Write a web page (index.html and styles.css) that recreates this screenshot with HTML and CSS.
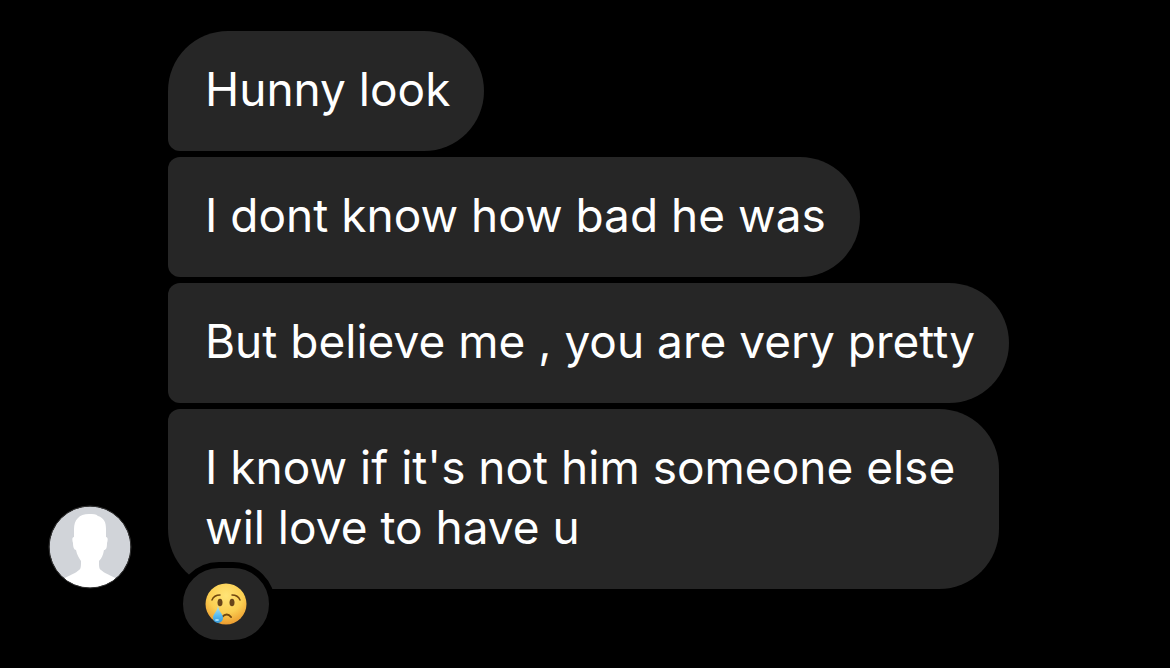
FILE: index.html
```html
<!DOCTYPE html>
<html lang="en">
<head>
<meta charset="utf-8">
<meta name="viewport" content="width=device-width, initial-scale=1">
<title>Chat</title>
<link rel="stylesheet" href="styles.css">
</head>
<body>
<main class="thread">
  <svg class="avatar" viewBox="0 0 84 84" role="img" aria-label="Profile picture">
    <defs><clipPath id="face"><circle cx="42" cy="42" r="40.5"/></clipPath></defs>
    <circle cx="42" cy="42" r="40.5" fill="#d1d4d9"/>
    <path clip-path="url(#face)" fill="#fff" d="M41 9C31 9 26 15 26 24v8c-2 0-2 3-1 6 0 4 1 7 3 7 1 5 3 8 5 11 0 5 0 8-2 9-3 3-9 5-18 10v10h58V75c-9-5-15-7-18-10-2-1-2-4-2-9 3-3 4-6 5-11 2 0 3-2 3-7 1-3 1-6-1-6v-8c0-7-2-11-8-13-2-2-5-2-9-2Z"/>
    <circle cx="42" cy="42" r="41" fill="none" stroke="#333"/>
  </svg>
  <div class="messages">
    <p class="bubble first">Hunny look</p>
    <p class="bubble">I dont know how bad he was</p>
    <p class="bubble">But believe me , you are very pretty</p>
    <div class="bubble last">
      <p class="text">I know if it's not him someone else wil love to have u</p>
      <button class="reaction" type="button" aria-label="Crying face reaction">
        <svg class="emoji" viewBox="0 0 42 42" aria-hidden="true">
          <defs>
            <radialGradient id="skin" cx=".5" cy=".3" r=".75"><stop offset="0" stop-color="#ffe477"/><stop offset=".55" stop-color="#fbcf52"/><stop offset="1" stop-color="#e9932a"/></radialGradient>
            <linearGradient id="tear" x1="0" y1="0" x2="0" y2="1"><stop offset="0" stop-color="#b5e4f2"/><stop offset=".55" stop-color="#5bbdf0"/><stop offset="1" stop-color="#3296d8"/></linearGradient>
          </defs>
          <circle cx="21" cy="21" r="20.5" fill="url(#skin)"/>
          <ellipse cx="15" cy="19.5" rx="2.5" ry="3.8" fill="#68451a"/>
          <ellipse cx="27" cy="19.5" rx="2.5" ry="3.8" fill="#68451a"/>
          <path d="M7 17q2-5 8-5M27 12q6 0 8 5" fill="none" stroke="#70470f" stroke-width="1.5" stroke-linecap="round"/>
          <path d="M17 34q5-5 9 0" fill="none" stroke="#70470f" stroke-width="2" stroke-linecap="round"/>
          <path d="M13 23c-1 6-5 8-5 12a5 5 0 0 0 10 0C18 31 14 29 13 23Z" fill="url(#tear)"/>
          <ellipse cx="12" cy="37" rx="2" ry="1" fill="#a6e2fb"/>
        </svg>
      </button>
    </div>
  </div>
</main>
</body>
</html>
```
FILE: styles.css
```css
* {
  box-sizing: border-box;
}

body {
  margin: 0;
  background: #000;
  color: #fff;
  font-family: Inter, "Liberation Sans", sans-serif;
}

.thread {
  display: flex;
  align-items: flex-end;
  gap: 36px;
  padding: 31px 48px 79px;
}

.avatar {
  flex: none;
  width: 84px;
  height: 84px;
}

.messages {
  display: flex;
  flex: 1;
  flex-direction: column;
  align-items: flex-start;
  gap: 6px;
  min-width: 0;
}

.bubble {
  position: relative;
  max-width: 860px;
  margin: 0;
  padding: 28px 34px 32px 37px;
  border-radius: 12px 60px 60px 12px;
  background: #262626;
  font-size: 46px;
  font-weight: 400;
  line-height: 60px;
}

.first {
  border-top-left-radius: 60px;
}

.last {
  max-width: 831px;
  border-bottom-left-radius: 60px;
}

.text {
  margin: 0;
}

.reaction {
  position: absolute;
  left: 9px;
  bottom: -57px;
  display: flex;
  align-items: center;
  justify-content: center;
  padding: 15px 22px;
  border: 6px solid #000;
  border-radius: 42px;
  background: #262626;
}

.emoji {
  width: 42px;
  height: 42px;
}
```
